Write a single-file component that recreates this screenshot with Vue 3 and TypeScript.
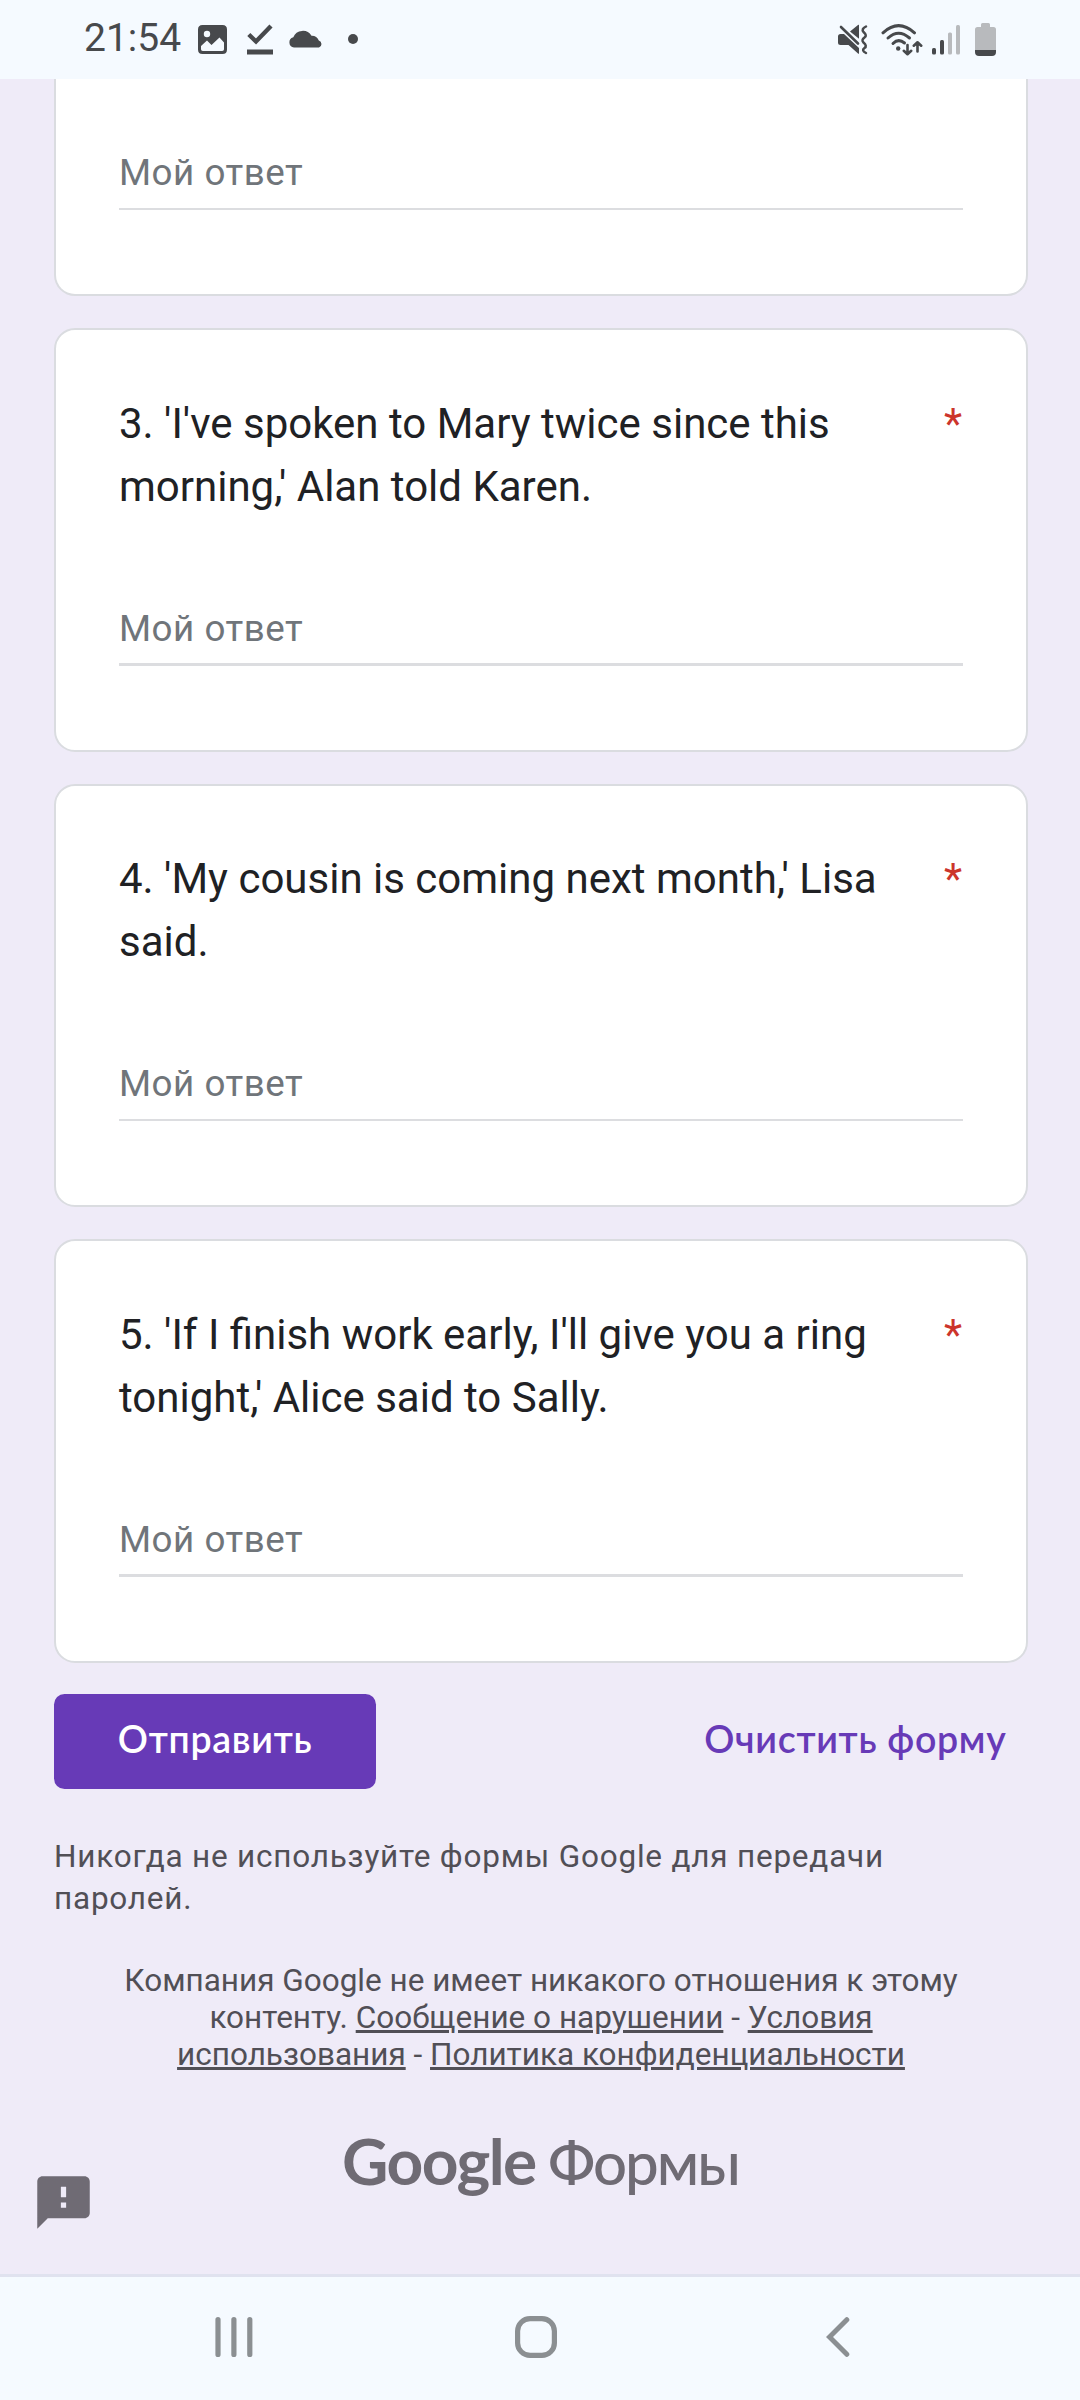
<script setup lang="ts">
interface Question {
  id: number
  lines: string[]
}

const placeholder = 'Мой ответ'

const questions: Question[] = [
  { id: 3, lines: ["3. 'I've spoken to Mary twice since this", "morning,' Alan told Karen."] },
  { id: 4, lines: ["4. 'My cousin is coming next month,' Lisa", 'said.'] },
  { id: 5, lines: ["5. 'If I finish work early, I'll give you a ring", "tonight,' Alice said to Sally."] },
]
</script>

<template>
  <div class="screen">
    <header class="status">
      <span class="clock">21:54</span>
      <svg class="i-photo" width="29" height="29" viewBox="0 0 29 29">
        <path fill="#47494c" fill-rule="evenodd" d="M4.500 0H24.500Q29 0 29 4.500V24.500Q29 29 24.500 29H4.500Q0 29 0 24.500V4.500Q0 0 4.500 0ZM9 5.800A3.200 3.200 0 1 0 9 12.200A3.200 3.200 0 1 0 9 5.800ZM3 21V24.200Q3 26 4.800 26H24.200Q26 26 26 24.200V17.500L21.500 12.500L13.500 20L9 15.500Z" />
      </svg>
      <svg class="i-check" width="27" height="31" viewBox="0 0 27 31">
        <path fill="none" stroke="#47494c" stroke-width="4.400" d="M1.800 10.500L9 17.500L24 2" />
        <rect x="0" y="25.500" width="26" height="5" fill="#47494c" />
      </svg>
      <svg class="i-cloud" width="34" height="19" viewBox="0 0 34 19">
        <path fill="#47494c" d="M5 18.500A5.200 5.200 0 0 1 4.300 8.300A10.200 10.200 0 0 1 22.500 6.800A7.500 7.500 0 0 1 29.800 11.600A3.600 3.600 0 0 1 30 18.500Z" />
      </svg>
      <i class="dot"></i>
      <span class="grow"></span>
      <svg class="i-mute" width="30" height="31" viewBox="0 0 30 31">
        <path fill="#47494c" d="M0 12.500Q0 10 2.500 10H6L21 24V29.500Q20.500 30 20 29.500L10.500 21H2.500Q0 21 0 18.500ZM12 7.500L20.300 .8Q21 .5 21 1.300V14.800Z" />
        <path fill="none" stroke="#47494c" stroke-width="2.600" stroke-linecap="round" d="M3 3L20 19.500" />
        <path fill="none" stroke="#47494c" stroke-width="2.500" stroke-linecap="round" stroke-linejoin="round" d="M28 2.500Q23 5 25.500 8Q29.500 11.500 26.500 13.500Q23 16 25.500 18.500Q29.500 22 26.500 24Q23 26.500 28 29" />
      </svg>
      <svg class="i-wifi" width="42" height="32" viewBox="0 0 42 32">
        <g fill="none" stroke="#47494c" stroke-width="3" stroke-linecap="round" stroke-linejoin="round">
          <path d="M2 8.800Q17.500 -5.500 33.500 8.800" />
          <path d="M7 14Q17.500 4.500 28.500 14" />
          <path d="M12 19.500Q17.500 14 23.500 19" />
          <path stroke-width="2.600" d="M26.500 21V30M22.800 26.800L26.500 30.200L30.200 26.800M36.500 27.500V18.500M32.800 21.700L36.500 18.300L40.200 21.700" />
        </g>
        <circle cx="17.200" cy="24.500" r="2.200" fill="#47494c" />
      </svg>
      <svg class="i-signal" width="28" height="30" viewBox="0 0 28 30">
        <rect x="0" y="23" width="4" height="6.500" rx="1.500" fill="#47494c" />
        <rect x="8" y="15" width="4" height="14.500" rx="1.500" fill="#47494c" />
        <rect x="16" y="7.500" width="4" height="22" rx="1.500" fill="#b8babd" />
        <rect x="24" y="0" width="4" height="29.500" rx="1.500" fill="#b8babd" />
      </svg>
      <svg class="i-battery" width="21" height="33" viewBox="0 0 21 33">
        <path fill="#b8babd" d="M6 4V1.500Q6 0 7.500 0H13.500Q15 0 15 1.500V4H18.500Q21 4 21 6.500V27H0V6.500Q0 4 2.500 4Z" />
        <path fill="#47494c" d="M0 27H21V29Q21 33 17 33H4Q0 33 0 29Z" />
      </svg>
    </header>

    <main class="page">
      <section class="card cut">
        <div class="answer">{{ placeholder }}</div>
        <div class="line"></div>
      </section>

      <section v-for="q in questions" :key="q.id" class="card">
        <div class="head">
          <div class="title">
            <div v-for="l in q.lines" :key="l">{{ l }}</div>
          </div>
          <span class="star">*</span>
        </div>
        <div class="answer">{{ placeholder }}</div>
        <div class="line"></div>
      </section>

      <div class="actions">
        <button class="send">Отправить</button>
        <span class="clear">Очистить форму</span>
      </div>

      <p class="warn">Никогда не используйте формы Google для передачи<br />паролей.</p>

      <p class="legal">
        Компания Google не имеет никакого отношения к этому<br />
        контенту. <a>Сообщение о нарушении</a> - <a>Условия<br />
        использования</a> - <a>Политика конфиденциальности</a>
      </p>

      <div class="brand"><span class="google">Google</span><span class="forms">Формы</span></div>

      <svg class="feedback" width="63" height="63" viewBox="0 0 24 24">
        <path fill="#6f6b74" d="M20 2H4c-1.100 0-1.990.900-1.990 2L2 22l4-4h14c1.100 0 2-.900 2-2V4c0-1.100-.900-2-2-2zm-7 12h-2v-2h2v2zm0-4h-2V6h2v4z" />
      </svg>
    </main>

    <nav class="nav">
      <svg width="38" height="42" viewBox="0 0 38 42">
        <path fill="none" stroke="#8b8f92" stroke-width="5.200" stroke-linecap="round" d="M3 3.600V38.400M18.900 3.600V38.400M34.800 3.600V38.400" />
      </svg>
      <svg class="home" width="42" height="42" viewBox="0 0 42 42">
        <rect x="2.600" y="2.600" width="36.800" height="36.800" rx="12.500" fill="none" stroke="#8b8f92" stroke-width="5.200" />
      </svg>
      <svg class="back" width="24" height="42" viewBox="0 0 24 42">
        <path fill="none" stroke="#8b8f92" stroke-width="5" stroke-linecap="round" d="M20.800 3.700L3.500 21L20.800 38.300" />
      </svg>
    </nav>
  </div>
</template>

<style>
body {
  margin: 0;
}
</style>

<style scoped>
.screen {
  width: 1080px;
  height: 2400px;
  display: flex;
  flex-direction: column;
  overflow: hidden;
  background: #efebf8;
  font-family: Roboto, sans-serif;
}
.status {
  height: 79px;
  flex: none;
  box-sizing: border-box;
  padding: 0 84px;
  display: flex;
  align-items: flex-start;
  background: #f5faff;
}
.status svg {
  flex: none;
}
.clock {
  width: 114px;
  font-size: 39px;
  line-height: 47px;
  margin-top: 15px;
  color: #47494c;
}
.i-photo { margin-top: 25px; }
.i-check { margin: 24px 0 0 20px; }
.i-cloud { margin: 29px 0 0 15px; }
.dot {
  width: 10px;
  height: 10px;
  margin: 34px 0 0 25px;
  border-radius: 50%;
  background: #47494c;
}
.grow { flex: 1; }
.i-mute { margin: 24px 13px 0 0; }
.i-wifi { margin: 24px 9px 0 0; }
.i-signal { margin: 25px 15px 0 0; }
.i-battery { margin-top: 23px; }

.page {
  flex: 1;
  min-height: 0;
  position: relative;
  padding: 0 52px 0 54px;
}
.card {
  box-sizing: border-box;
  height: 423.500px;
  margin-bottom: 32px;
  padding: 61.500px 63px 0;
  border: 2px solid #dadce0;
  border-radius: 21px;
  background: #fff;
}
.cut {
  height: 217px;
  padding-top: 62px;
  border-top: 0;
  border-radius: 0 0 21px 21px;
}
.head {
  display: flex;
  justify-content: space-between;
  height: 126px;
  margin-bottom: 79px;
  padding-right: 1px;
  font-size: 42px;
  line-height: 63px;
  color: #202124;
}
.title {
  white-space: nowrap;
}
.star {
  color: #cc352b;
}
.answer {
  font-size: 36.750px;
  line-height: 63px;
  letter-spacing: 0.525px;
  color: #70757a;
}
.line {
  height: 2.625px;
  margin-top: 3.500px;
  background: #dcdde0;
}
.actions {
  display: flex;
  justify-content: space-between;
  align-items: center;
  margin-top: -0.500px;
  height: 94.500px;
  padding-right: 21.500px;
}
.send {
  width: 322px;
  height: 94.500px;
  border: 0;
  padding: 0 0 5px;
  border-radius: 10.500px;
  background: #673ab7;
  color: #fff;
}
.send,
.clear {
  font-family: Lato, "Open Sans", sans-serif;
  font-weight: 600;
  font-size: 37.500px;
  letter-spacing: 0.700px;
  white-space: nowrap;
}
.clear {
  padding-bottom: 5px;
  color: #673ab7;
}
.warn {
  margin: 47.500px 0 0;
  font-size: 31.500px;
  line-height: 42px;
  letter-spacing: 0.787px;
  color: #514f56;
}
.legal {
  margin: 41.500px 0 0;
  font-size: 31.500px;
  line-height: 37px;
  text-align: center;
  color: #514f56;
}
.legal a {
  text-decoration: underline;
}
.brand {
  margin-top: 48px;
  padding-left: 288px;
  display: flex;
  align-items: baseline;
  white-space: nowrap;
  line-height: 80px;
  color: #6f6b74;
}
.google {
  width: 206px;
  font-family: Lato, sans-serif;
  font-weight: 700;
  font-size: 64px;
  letter-spacing: -1.600px;
}
.forms {
  font-family: Lato, sans-serif;
  font-weight: 500;
  font-size: 60px;
  letter-spacing: -2px;
}
.feedback {
  position: absolute;
  left: 31.700px;
  top: 2092.400px;
}
.nav {
  flex: none;
  box-sizing: border-box;
  height: 126px;
  border-top: 3px solid #e0e2ef;
  padding: 39px 0 0 215px;
  display: flex;
  background: #f5faff;
}
.home {
  margin-left: 262px;
}
.back {
  margin-left: 269px;
}
</style>
